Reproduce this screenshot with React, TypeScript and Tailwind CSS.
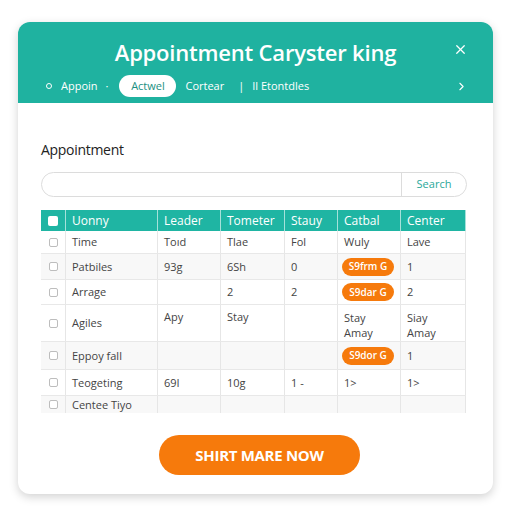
import { X, ChevronRight } from 'lucide-react';

type Row = {
  name: string;
  leader?: string;
  tometer?: string;
  stay?: string;
  catbal?: string | string[];
  center?: string | string[];
  badge?: boolean;
  h: string;
  bg: string;
  top?: boolean;
};

const rows: Row[] = [
  { name: 'Time', leader: 'Toıd', tometer: 'Tlae', stay: 'Fol', catbal: 'Wuly', center: 'Lave', h: 'h-[23px]', bg: 'bg-white' },
  { name: 'Patbiles', leader: '93g', tometer: '6Sh', stay: '0', catbal: 'S9frm G', badge: true, center: '1', h: 'h-[26px]', bg: 'bg-[#f8f8f8]' },
  { name: 'Arrage', tometer: '2', stay: '2', catbal: 'S9dar G', badge: true, center: '2', h: 'h-[25px]', bg: 'bg-white' },
  { name: 'Agiles', leader: 'Apy', tometer: 'Stay', catbal: ['Stay', 'Amay'], center: ['Siay', 'Amay'], h: 'h-[37px]', bg: 'bg-white', top: true },
  { name: 'Eppoy fall', catbal: 'S9dor G', badge: true, center: '1', h: 'h-[28px]', bg: 'bg-[#f8f8f8]' },
  { name: 'Teogeting', leader: '69I', tometer: '10g', stay: '1 -', catbal: '1>', center: '1>', h: 'h-[26px]', bg: 'bg-white' },
  { name: 'Centee Tiyo', h: 'h-[17px]', bg: 'bg-[#f8f8f8]' },
];

const Cell = ({ v, top, w, badge }: { v?: string | string[]; top?: boolean; w: string; badge?: boolean }) => (
  <div className={`${w} border-r border-[#e6e6e6] px-[6px] flex ${top ? 'items-start pt-[5px]' : 'items-center'}`}>
    {badge && typeof v === 'string' ? (
      <span className="bg-[#f67a0c] text-white rounded-full h-[18px] w-[55px] -ml-[2px] flex items-center justify-center whitespace-nowrap text-[10px] font-semibold">
        {v}
      </span>
    ) : Array.isArray(v) ? (
      <div className="flex flex-col leading-[15px]">
        {v.map((x) => (
          <span key={x}>{x}</span>
        ))}
      </div>
    ) : (
      <span className="whitespace-nowrap leading-[14px]">{v}</span>
    )}
  </div>
);

export default function App() {
  return (
    <div className="w-[512px] h-[512px] bg-white pt-[22px] pl-[18px] font-['Open_Sans',sans-serif]">
      <div className="w-[475px] h-[472px] bg-white rounded-[12px] shadow-[0_3px_10px_rgba(0,0,0,0.18)] overflow-hidden flex flex-col">
        {/* header */}
        <div className="relative bg-[#1fb2a0] h-[81px] flex flex-col items-center pt-[15px]">
          <h1 className="text-white text-[22px] leading-[30px] font-semibold tracking-[-0.2px]">Appointment Caryster king</h1>
          <X className="absolute right-[25px] top-[20px] text-white" size={15} strokeWidth={2} />
          <div className="w-full flex items-center mt-[8px] pl-[28px] pr-[25px] text-white text-[11px]">
            <span className="w-[6px] h-[6px] rounded-full border border-white mr-[9px]" />
            <span>Appoin</span>
            <span className="ml-[8px] mr-[11px]">·</span>
            <span className="bg-white text-[#1c8f82] rounded-full h-[22px] w-[57px] flex items-center justify-center">Actwel</span>
            <span className="ml-[9px]">Cortear</span>
            <span className="ml-[14px]">|</span>
            <span className="ml-[8px]">Il Etontdles</span>
            <ChevronRight className="ml-auto text-white" size={13} />
          </div>
        </div>

        {/* body */}
        <div className="px-[23px] pt-[37px] flex flex-col">
          <h2 className="text-[14px] leading-[20px] text-[#222] tracking-[-0.3px]">Appointment</h2>
          <div className="mt-[12px] h-[25px] w-[426px] rounded-full border border-[#dcdcdc] flex overflow-hidden">
            <div className="flex-1" />
            <div className="w-[65px] border-l border-[#dcdcdc] flex items-center justify-center text-[11px] text-[#2aa89a]">Search</div>
          </div>

          <div className="mt-[13px] w-[425px] text-[11px] text-[#444]">
            <div className="flex h-[21px] bg-[#1fb5a3] text-white text-[12px]">
              <div className="w-[25px] border-r border-white/60 flex items-center justify-center">
                <span className="w-[10px] h-[10px] bg-white rounded-[2px]" />
              </div>
              {['Uonny', 'Leader', 'Tometer', 'Stauy', 'Catbal', 'Center'].map((t, i) => (
                <div
                  key={t}
                  className={`${['w-[92px]', 'w-[63px]', 'w-[64px]', 'w-[53px]', 'w-[63px]', 'w-[65px]'][i]} border-r border-white/60 px-[6px] flex items-center`}
                >
                  {t}
                </div>
              ))}
            </div>
            {rows.map((r, i) => (
              <div key={r.name} className={`flex ${r.h} ${r.bg} ${i < rows.length - 1 ? 'border-b border-[#e8e8e8]' : ''}`}>
                <div className="w-[25px] border-r border-[#e6e6e6] flex justify-center items-center">
                  <span className="w-[9px] h-[9px] border border-[#bdbdbd] rounded-[2px] bg-white" />
                </div>
                <Cell v={r.name} w="w-[92px]" />
                <Cell v={r.leader} top={r.top} w="w-[63px]" />
                <Cell v={r.tometer} top={r.top} w="w-[64px]" />
                <Cell v={r.stay} top={r.top} w="w-[53px]" />
                <Cell v={r.catbal} top={r.top} w="w-[63px]" badge={r.badge} />
                <Cell v={r.center} top={r.top} w="w-[65px]" />
              </div>
            ))}
          </div>

          <div className="flex justify-center mt-[22px] pl-[8px]">
            <button className="w-[201px] h-[40px] rounded-full bg-[#f67a0c] text-white text-[15px] font-bold tracking-[-0.3px]">
              SHIRT MARE NOW
            </button>
          </div>
        </div>
      </div>
    </div>
  );
}
